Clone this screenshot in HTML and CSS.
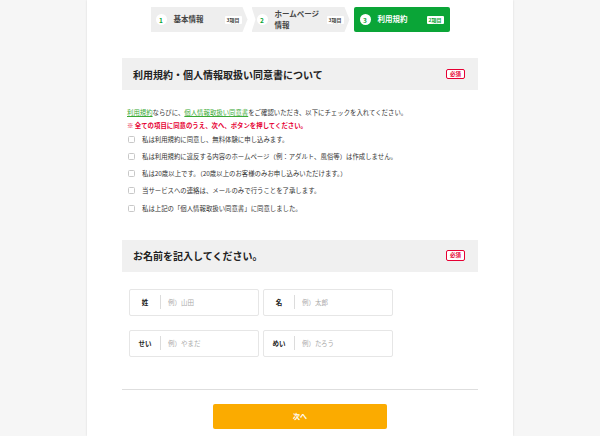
FILE: index.html
```html
<!DOCTYPE html>
<html lang="ja">
<head>
<meta charset="utf-8">
<link rel="stylesheet" href="styles.css">
</head>
<body>
<div class="page">
  <ol class="steps">
    <li class="step first"><span class="num">1</span><span class="label">基本情報</span><span class="cnt">3項目</span></li>
    <li class="step"><span class="num">2</span><span class="label">ホームページ<br>情報</span><span class="cnt">3項目</span></li>
    <li class="step active"><span class="num">3</span><span class="label">利用規約</span><span class="cnt">2項目</span></li>
  </ol>

  <section class="sec">
    <h2 class="sec-head"><span>利用規約・個人情報取扱い同意書について</span><span class="req">必須</span></h2>
    <div class="terms">
      <p class="intro"><a href="#">利用規約</a>ならびに、<a href="#">個人情報取扱い同意書</a>をご確認いただき、以下にチェックを入れてください。</p>
      <p class="warn">※ 全ての項目に同意のうえ、次へ、ボタンを押してください。</p>
      <ul class="checks">
        <li><span class="box"></span>私は利用規約に同意し、無料体験に申し込みます。</li>
        <li><span class="box"></span>私は利用規約に違反する内容のホームページ（例：アダルト、風俗等）は作成しません。</li>
        <li><span class="box"></span>私は20歳以上です。（20歳以上のお客様のみお申し込みいただけます。）</li>
        <li><span class="box"></span>当サービスへの連絡は、メールのみで行うことを了承します。</li>
        <li><span class="box"></span>私は上記の「個人情報取扱い同意書」に同意しました。</li>
      </ul>
    </div>
  </section>

  <section class="sec sec2">
    <h2 class="sec-head"><span>お名前を記入してください。</span><span class="req">必須</span></h2>
    <div class="names">
      <div class="field"><span class="fl">姓</span><span class="ph">例）山田</span></div>
      <div class="field"><span class="fl">名</span><span class="ph">例）太郎</span></div>
      <div class="field"><span class="fl">せい</span><span class="ph">例）やまだ</span></div>
      <div class="field"><span class="fl">めい</span><span class="ph">例）たろう</span></div>
    </div>
  </section>

  <hr class="rule">
  <div class="actions"><button class="next">次へ</button></div>
</div>
</body>
</html>
```
FILE: styles.css
```css
* { box-sizing: border-box; margin: 0; padding: 0; }
html, body { height: 100%; }
body {
  background: #f6f6f6;
  font-family: "Noto Sans CJK JP", "Noto Sans", sans-serif;
  color: #333;
}
.page {
  width: 426px;
  min-height: 100%;
  margin: 0 auto;
  background: #fff;
  box-shadow: 0 0 2px rgba(0,0,0,0.12);
  padding: 7px 35px 0;
}
.steps {
  list-style: none;
  display: flex;
  justify-content: center;
  gap: 4px;
}
.step {
  width: 98px;
  height: 25px;
  background: #eeeeee;
  display: flex;
  align-items: center;
  padding: 0 6px 0 5px;
  font-size: 7.5px;
  font-weight: bold;
  color: #444;
  clip-path: polygon(0 0, calc(100% - 5px) 0, 100% 50%, calc(100% - 5px) 100%, 0 100%, 4px 50%);
}
.step.first {
  clip-path: polygon(0 0, calc(100% - 5px) 0, 100% 50%, calc(100% - 5px) 100%, 0 100%);
  padding-left: 5px;
  width: 97px;
}
.step.active {
  background: #0aa537;
  color: #fff;
  clip-path: none;
  border-radius: 2px;
  width: 96px;
  padding-left: 6px;
}
.num {
  width: 11px;
  height: 11px;
  border-radius: 50%;
  background: #fff;
  color: #0aa537;
  font-size: 6.5px;
  display: flex;
  align-items: center;
  justify-content: center;
  margin-right: 7px;
  flex: none;
}
.label { flex: none; line-height: 1.45; white-space: nowrap; }
.cnt {
  margin-left: auto;
  font-size: 5px;
  background: #fff;
  color: #444;
  padding: 1px 2px;
  border-radius: 1px;
  line-height: 1.2;
}
.active .cnt { color: #0aa537; }

.sec { margin-top: 26px; }
.sec-head {
  height: 32px;
  background: #f0f0f0;
  display: flex;
  align-items: center;
  justify-content: space-between;
  padding: 0 13px 0 11px;
  font-size: 10px;
  font-weight: bold;
  color: #222;
}
.req {
  font-size: 5.5px;
  color: #e60033;
  border: 1px solid #e60033;
  border-radius: 2px;
  padding: 1px 3px;
  line-height: 1.1;
  background: #fff;
}
.terms { padding: 18px 5px 0 5px; font-size: 6.4px; }
.intro { line-height: 10px; height: 10px; }
.intro a { color: #3aaa35; }
.warn { color: #e60033; line-height: 10px; margin-top: 3px; font-weight: bold; }
.checks { list-style: none; margin-top: 0; }
.checks li {
  display: flex;
  align-items: center;
  height: 17px;
}
.checks li:nth-child(4) { height: 17.5px; }
.box {
  width: 7px;
  height: 7px;
  border: 1px solid #c8c8c8;
  border-radius: 1.5px;
  margin: 0 7px 0 1px;
  flex: none;
}
.sec2 { margin-top: 23px; }
.names {
  display: grid;
  grid-template-columns: 130px 130px;
  gap: 14px 4px;
  padding: 17px 0 0 7px;
}
.field {
  height: 27px;
  border: 1px solid #e6e6e6;
  border-radius: 2px;
  display: flex;
  align-items: center;
  font-size: 6.5px;
}
.fl {
  width: 31px;
  text-align: center;
  font-weight: bold;
  color: #222;
  border-right: 1px solid #dcdcdc;
  line-height: 14px;
  flex: none;
}
.ph { color: #aaa; padding-left: 7px; }
.rule {
  border: 0;
  border-top: 1px solid #dedede;
  margin-top: 32px;
}
.actions { display: flex; justify-content: center; padding-top: 14px; }
.next {
  width: 174px;
  height: 25px;
  border: 0;
  border-radius: 2px;
  background: #fbab00;
  color: #fff;
  font-family: inherit;
  font-size: 7px;
  font-weight: bold;
}
```
